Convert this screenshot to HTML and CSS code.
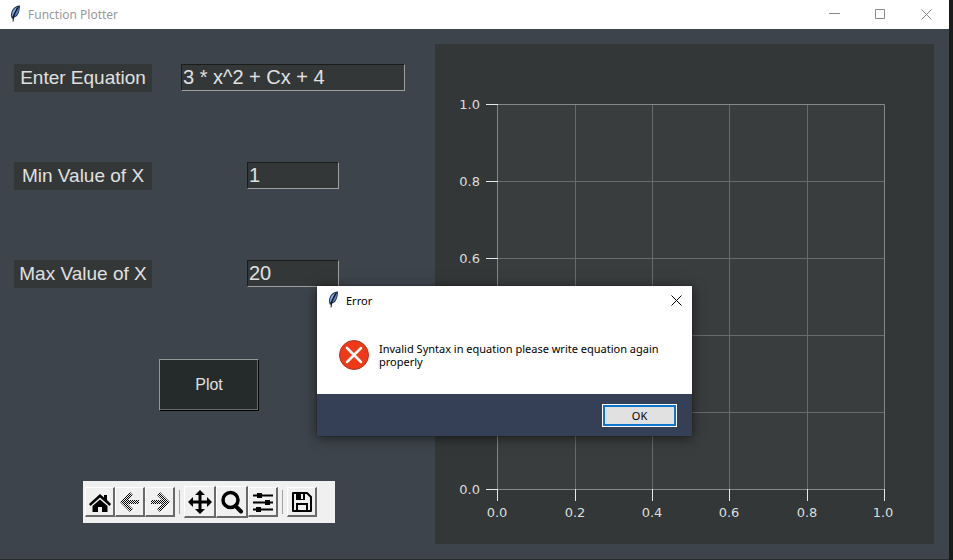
FILE: index.html
```html
<!DOCTYPE html>
<html lang="en">
<head>
<meta charset="utf-8">
<title>Function Plotter</title>
<link rel="stylesheet" href="styles.css">
</head>
<body>
<svg class="defs" aria-hidden="true">
  <pattern id="stipple" width="2" height="2" patternUnits="userSpaceOnUse"><path d="M0 0h1v1H0zM1 1h1v1H1z" fill="#000"/></pattern>
  <symbol id="feather" viewBox="0 0 12 17">
    <path d="M3 14C1 10 2 5 6 2 8 .8 10 .5 11 .5 11 3 10.500 8 8 11L4.500 13z" fill="#24344f"/>
    <path d="M3.200 11C2.500 7 4.500 4 8 2L5.500 8 4 11.500z" fill="#7fb0e6"/>
    <path d="M5.500 11L9.800 2C10 5 9 8.500 7 10.500z" fill="#5a8ac8"/>
    <path d="M8.500 3L5 9 4 16.500" fill="none" stroke="#0a0d12"/>
  </symbol>
</svg>
<div class="desktop">
  <div class="window">
    <header class="titlebar">
      <svg class="feather"><use href="#feather"/></svg>
      <h1 class="title">Function Plotter</h1>
      <div class="controls">
        <button class="control" aria-label="Minimize"><svg viewBox="0 0 11 11"><path d="M0 4.500h11"/></svg></button>
        <button class="control" aria-label="Maximize"><svg viewBox="0 0 11 11"><path d="M.5 .5h9v9H.5z"/></svg></button>
        <button class="control" aria-label="Close"><svg viewBox="0 0 11 11"><path d="M.5 .5l10 10M10.500 .5l-10 10"/></svg></button>
      </div>
    </header>
    <main class="content">
      <form class="form">
        <div class="row"><label class="label" for="eq">Enter Equation</label><div class="field"><input class="entry wide" id="eq" type="text" value="3 * x^2 + Cx + 4"></div></div>
        <div class="row"><label class="label" for="min">Min Value of X</label><div class="field"><input class="entry" id="min" type="text" value="1"></div></div>
        <div class="row"><label class="label" for="max">Max Value of X</label><div class="field"><input class="entry" id="max" type="text" value="20"></div></div>
        <div class="action"><button class="plot-button" type="button">Plot</button></div>
        <div class="action">
          <div class="toolbar">
            <button class="tool" type="button" aria-label="Home"><svg viewBox="0 0 22 22"><path d="M11 3l4 3.500V4h3v5l4 4-1.500 2L11 6.500 1.500 15 0 13z"/><path d="M3.500 15L11 8.500l7.500 6.500v6H13v-5H9v5H3.500z"/></svg></button>
            <button class="tool" type="button" aria-label="Back"><svg viewBox="0 0 22 22"><path fill="url(#stipple)" d="M11 1l3 3-5 5h11v4H9l5 5-3 3L1 11z"/></svg></button>
            <button class="tool" type="button" aria-label="Forward"><svg viewBox="0 0 22 22"><path fill="url(#stipple)" d="M11 1L8 4l5 5H2v4h11l-5 5 3 3 10-10z"/></svg></button>
            <span class="separator"></span>
            <button class="tool large" type="button" aria-label="Pan"><svg viewBox="0 0 24 24"><path d="M12 0l5 5h-3.500v5.500H19V7l5 5-5 5v-3.500h-5.500V19H17l-5 5-5-5h3.500v-5.500H5V17l-5-5 5-5v3.500h5.500V5H7z"/></svg></button>
            <button class="tool large" type="button" aria-label="Zoom"><svg viewBox="0 0 24 24"><circle cx="10.500" cy="10" r="7.500" fill="none" stroke="#000" stroke-width="3.500"/><path d="M15.500 16l5.500 5.500" stroke="#000" stroke-width="4" stroke-linecap="round"/></svg></button>
            <button class="tool" type="button" aria-label="Configure subplots"><svg viewBox="0 0 22 22"><path d="M1 4.500h20M1 11.500h20M1 18.500h20" stroke="#000" stroke-width="2"/><path d="M5 2h5v5H5zM13 9h5v5h-5zM4 16h5v5H4z"/></svg></button>
            <span class="separator"></span>
            <button class="tool" type="button" aria-label="Save"><svg viewBox="0 0 22 22"><path d="M2 2h14l4 4v14H2z" fill="none" stroke="#000" stroke-width="2" stroke-linejoin="round"/><path d="M5 2h9v7H5z"/><path d="M10 3h2v5h-2z" fill="#f0f0f0"/><path d="M6 20v-7h10v7" fill="none" stroke="#000" stroke-width="2"/></svg></button>
          </div>
        </div>
      </form>
      <svg class="plot" viewBox="0 0 499 500" role="img" aria-label="Empty plot">
        <rect x="62" y="60" width="388" height="386" fill="#3a3d3d"/>
        <path class="grid" d="M140.500 60v386M217.500 60v386M294.500 60v386M372.500 60v386M62 137.500h388M62 214.500h388M62 291.500h388M62 368.500h388"/>
        <path class="frame" d="M62.500 60.500h387v385h-387z"/>
        <path class="ticks" d="M62.500 445v12M140.500 445v12M217.500 445v12M294.500 445v12M372.500 445v12M449.500 445v12M51 60.500h12M51 137.500h12M51 214.500h12M51 291.500h12M51 368.500h12M51 445.500h12"/>
        <g class="y-labels"><text x="45" y="65">1.0</text><text x="45" y="142">0.8</text><text x="45" y="219">0.6</text><text x="45" y="450">0.0</text></g>
        <g class="x-labels"><text x="62" y="473">0.0</text><text x="140" y="473">0.2</text><text x="217" y="473">0.4</text><text x="294" y="473">0.6</text><text x="372" y="473">0.8</text><text x="448" y="473">1.0</text></g>
      </svg>
    </main>
  </div>
  <section class="dialog" role="alertdialog" aria-labelledby="dialog-title">
    <header class="dialog-bar">
      <svg class="feather"><use href="#feather"/></svg>
      <h2 class="dialog-title" id="dialog-title">Error</h2>
      <button class="dialog-close" aria-label="Close dialog"><svg viewBox="0 0 11 11"><path d="M.5 .5l10 10M10.500 .5l-10 10"/></svg></button>
    </header>
    <div class="dialog-body">
      <svg class="error-icon" viewBox="0 0 30 30"><circle cx="15" cy="15" r="14.500" fill="#f03a17" stroke="#a83a28"/><path d="M8 8l14 14M22 8L8 22" stroke="#fff" stroke-width="2.500" stroke-linecap="round"/></svg>
      <p class="message">Invalid Syntax in equation please write equation again properly</p>
    </div>
    <footer class="dialog-footer"><button class="ok">OK</button></footer>
  </section>
</div>
</body>
</html>
```
FILE: styles.css
```css
* { box-sizing: border-box; }
body { margin: 0; background: #1b1b1b; }
h1, h2, p { margin: 0; font-weight: 400; }
button { padding: 0; border: 0; background: none; font: inherit; color: inherit; }
svg { display: block; }
.defs { position: absolute; width: 0; height: 0; }

.desktop { position: relative; min-height: 100vh; padding-right: 4px; overflow: hidden; }
.window { background: #3d444b; border-bottom: 1px solid #292d30; }

.titlebar { display: flex; align-items: center; height: 29px; padding-left: 9px; background: #fff; color: #999; }
.feather { width: 12px; height: 17px; margin-bottom: 2px; }
.title { margin-left: 7px; font: 12px/16px "Noto Sans", sans-serif; }
.controls { display: flex; margin-left: auto; }
.control { display: grid; place-items: center; width: 46px; height: 27px; }
.control svg, .dialog-close svg { width: 11px; height: 11px; fill: none; stroke: #888; }

.content { display: flex; align-items: flex-start; }
.form { flex: 0 0 420px; font-family: "Liberation Sans", Arial, sans-serif; color: #e0e0e0; }
.row { display: flex; align-items: flex-start; padding: 35px 0 35px 14px; }
.label { width: 138px; height: 28px; background: #343737; font-size: 19px; line-height: 28px; text-align: center; }
.field { flex: 1; display: flex; justify-content: center; padding-left: 14px; }
.entry { width: 92px; height: 27px; padding: 0 1px; border: 1px solid; border-color: #1b1d1d #a0a0a0 #a0a0a0 #1b1d1d; border-radius: 0; background: #343737; color: #e0e0e0; font: 20px/24px "Liberation Sans", Arial, sans-serif; outline: 0; }
.wide { width: 224px; }
.action { display: flex; justify-content: center; padding: 36px 2px 35px 0; }
.plot-button { width: 100px; height: 52px; border: 1px solid; border-color: #909b98 #000 #000 #909b98; box-shadow: inset -1px -1px #69706e; background: #252b2a; font-size: 16px; }
.action + .action { padding-top: 35px; }

.toolbar { display: flex; align-items: center; width: 252px; height: 42px; padding-left: 2px; background: #f0f0f0; }
.tool { display: grid; place-items: center; width: 30px; height: 30px; border: solid; border-width: 1px 2px 2px 1px; border-color: #fff #696969 #696969 #fff; background: #f0f0f0; }
.tool svg { width: 22px; height: 22px; }
.tool.large { width: 32px; height: 32px; }
.tool.large svg { width: 24px; height: 24px; }
.separator { width: 1px; height: 24px; margin: 0 4px; background: #a0a0a0; }

.plot { flex: 1; min-width: 0; margin: 15px; background: #343737; }
.grid, .frame, .ticks { fill: none; stroke: #686b6b; }
.frame { stroke: #858888; }
.ticks { stroke: #e8e8e8; }
.plot text { font: 13px "DejaVu Sans", sans-serif; fill: #dcdedc; }
.x-labels { text-anchor: middle; }
.y-labels { text-anchor: end; }

.dialog { position: absolute; left: 317px; top: 286px; width: 375px; background: #fff; color: #000; font: 11px/13px "Noto Sans", sans-serif; box-shadow: 0 2px 12px rgba(0, 0, 0, .55), 0 0 1px #222; }
.dialog-bar { display: flex; align-items: center; height: 29px; padding: 0 10px; }
.dialog-title { margin-left: 7px; font-size: 11px; }
.dialog-close { margin-left: auto; }
.dialog-close svg { stroke: #000; }
.dialog-body { display: flex; align-items: center; gap: 10px; height: 79px; padding: 0 22px; }
.error-icon { flex: none; width: 30px; height: 30px; }
.message { flex: 1; }
.dialog-footer { display: flex; justify-content: flex-end; align-items: center; height: 42px; padding-right: 15px; background: #354056; }
.ok { width: 75px; height: 23px; border: 1px solid #fff; background: #e1e1e1; box-shadow: inset 0 0 0 2px #0f74cc; }
```
